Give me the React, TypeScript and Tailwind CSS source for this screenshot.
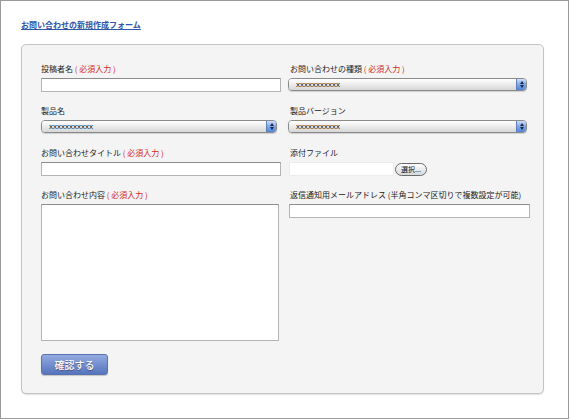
import React from "react";

const Req = () => (
  <span className="text-[#d42a2a]"> ( 必須入力 )</span>
);

const Label = ({ children }: { children: React.ReactNode }) => (
  <div className="text-[8px] leading-[12px] text-[#222] whitespace-nowrap">{children}</div>
);

const TextInput = ({ w }: { w: string }) => (
  <div className={`${w} h-[14px] mt-[3px] bg-white border border-[#b4b4b4] border-t-[#8c8c8c]`} />
);

const Select = ({ w }: { w: string }) => (
  <div
    className={`${w} h-[13px] mt-[3px] flex items-stretch rounded-[4px] border border-[#8a8a8a] overflow-hidden shadow-[0_1px_1px_rgba(0,0,0,0.15)]`}
  >
    <div className="flex-1 flex items-center pl-[7px] bg-linear-to-b from-[#ffffff] via-[#ececec] to-[#d6d6d6] text-[8px] leading-none text-[#111] font-['Liberation_Sans',sans-serif]">
      xxxxxxxxxxx
    </div>
    <div className="w-[10px] border-l border-[#5f7fb8] bg-linear-to-b from-[#cfe0fb] via-[#7fa7ea] to-[#4f84dc] flex flex-col items-center justify-center gap-[1px]">
      <div className="w-0 h-0 border-l-[2px] border-r-[2px] border-b-[3px] border-l-transparent border-r-transparent border-b-[#1c2a44]" />
      <div className="w-0 h-0 border-l-[2px] border-r-[2px] border-t-[3px] border-l-transparent border-r-transparent border-t-[#1c2a44]" />
    </div>
  </div>
);

export default function App() {
  return (
    <div className="w-[569px] h-[419px] bg-white border border-[#9a9a9a] overflow-hidden font-['Noto_Sans_CJK_JP',sans-serif]">
      <div className="pl-[20px] pt-[19px]">
        <div className="text-[8px] leading-[10px] font-bold text-[#2f55a8] underline underline-offset-[1px] whitespace-nowrap">
          お問い合わせの新規作成フォーム
        </div>
        <div className="mt-[14px] w-[523px] h-[350px] bg-[#f4f4f4] border border-[#c4c4c4] rounded-[5px] shadow-[0_1px_1px_rgba(0,0,0,0.12)] pl-[19px] pt-[18px]">
          <div className="grid grid-cols-[240px_240px] gap-x-[9px]">
            <div className="h-[42px]">
              <Label>
                投稿者名
                <Req />
              </Label>
              <TextInput w="w-[240px]" />
            </div>
            <div className="h-[42px]">
              <Label>
                お問い合わせの種類
                <Req />
              </Label>
              <div className="-ml-[2px]">
                <Select w="w-[239px]" />
              </div>
            </div>

            <div className="h-[42px]">
              <Label>製品名</Label>
              <Select w="w-[236px]" />
            </div>
            <div className="h-[42px]">
              <Label>製品バージョン</Label>
              <div className="-ml-[2px]">
                <Select w="w-[239px]" />
              </div>
            </div>

            <div className="h-[42px]">
              <Label>
                お問い合わせタイトル
                <Req />
              </Label>
              <TextInput w="w-[240px]" />
            </div>
            <div className="h-[42px]">
              <Label>添付ファイル</Label>
              <div className="flex items-center mt-[3px] -ml-[1px]">
                <div className="w-[105px] h-[14px] bg-white border border-[#ececec]" />
                <div className="ml-[1px] h-[13px] px-[5px] rounded-full border border-[#6a6a6a] bg-linear-to-b from-[#ffffff] to-[#d8d8d8] text-[7px] leading-[11px] text-[#111] whitespace-nowrap">
                  選択...
                </div>
              </div>
            </div>

            <div>
              <Label>
                お問い合わせ内容
                <Req />
              </Label>
              <div className="w-[238px] h-[137px] mt-[3px] bg-white border border-[#b4b4b4] border-t-[#8c8c8c]" />
            </div>
            <div>
              <Label>返信通知用メールアドレス (半角コンマ区切りで複数設定が可能)</Label>
              <div className="-ml-[1px]">
                <TextInput w="w-[241px]" />
              </div>
            </div>
          </div>
          <div className="mt-[13px] w-[67px] h-[21px] rounded-[3px] border border-[#5a72b2] bg-linear-to-b from-[#94abe0] to-[#5674bd] flex items-center justify-center text-white text-[10px] font-medium [text-shadow:0_1px_1px_rgba(0,0,0,0.4)] shadow-[0_1px_1px_rgba(0,0,0,0.2)]">
            確認する
          </div>
        </div>
      </div>
    </div>
  );
}
